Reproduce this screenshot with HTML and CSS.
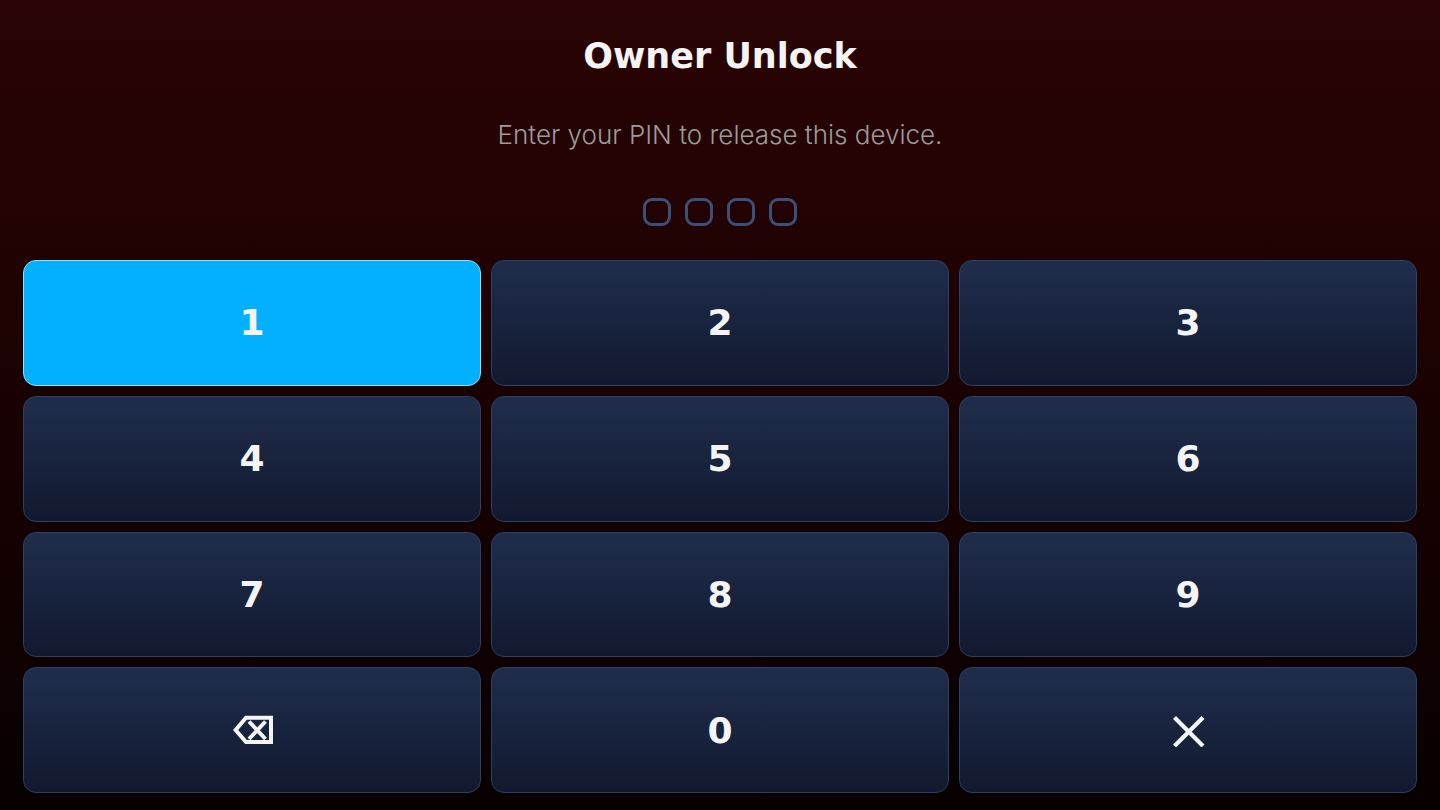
FILE: index.html
```html
<!DOCTYPE html>
<html lang="en">
<head>
    <meta charset="UTF-8">
    <meta name="viewport" content="width=device-width, initial-scale=1.0">
    <title>Owner Unlock</title>
    <link rel="stylesheet" href="styles.css">
</head>
<body>
    <main class="unlock">
        <h1 class="title">Owner Unlock</h1>
        <p class="hint">Enter your PIN to release this device.</p>

        <!-- one box for each digit of the PIN -->
        <div class="pin" role="img" aria-label="PIN digits">
            <span class="pin-box"></span>
            <span class="pin-box"></span>
            <span class="pin-box"></span>
            <span class="pin-box"></span>
        </div>

        <div class="keypad">
            <button type="button" class="key active">1</button>
            <button type="button" class="key">2</button>
            <button type="button" class="key">3</button>
            <button type="button" class="key">4</button>
            <button type="button" class="key">5</button>
            <button type="button" class="key">6</button>
            <button type="button" class="key">7</button>
            <button type="button" class="key">8</button>
            <button type="button" class="key">9</button>
            <button type="button" class="key" aria-label="Delete">
                <svg class="icon" width="42" height="32" viewBox="0 0 42 32">
                    <path d="M4.6 16 L15 3.8 H40 V28 H15 Z" stroke-width="4"/>
                    <path d="M18 7.5 L34.5 25 M34.5 7.5 L18 25" stroke-width="4"/>
                </svg>
            </button>
            <button type="button" class="key">0</button>
            <button type="button" class="key" aria-label="Cancel">
                <svg class="icon" width="34" height="34" viewBox="0 0 34 34">
                    <path d="M3.5 4.5 L32 33 M32 4.5 L3.5 33" stroke-width="4.2"/>
                </svg>
            </button>
        </div>
    </main>
</body>
</html>
```
FILE: styles.css
```css
*{
    box-sizing: border-box;
}
body{
    margin: 0;
    background: linear-gradient(#2a0404, #200202 33%, #080000);
    color: #f4f4f4;
    font-family: Inter, sans-serif;
}
.unlock{
    display: flex;
    flex-direction: column;
    align-items: center;
    min-height: 100vh;
    padding: 32px 23px 17px;
}
.title{
    margin: 0;
    font-family: "DejaVu Sans", sans-serif;
    font-size: 35px;
    font-weight: bold;
    line-height: 48px;
}
.hint{
    margin: 36px 0 44px;
    color: #9c9c9c;
    font-size: 26px;
    font-weight: 350;
    line-height: 38px;
}
.pin{
    display: flex;
    gap: 14px;
    margin-bottom: 34px;
}
.pin-box{
    width: 28px;
    height: 28px;
    border: 3px solid #3b4f77;
    border-radius: 9px;
}
.keypad{
    flex: 1;
    display: grid;
    grid-template-columns: repeat(3, 1fr);
    grid-auto-rows: 1fr;
    gap: 10px;
    width: 100%;
}
.key{
    display: flex;
    align-items: center;
    justify-content: center;
    padding: 0;
    border: 1px solid #2e4064;
    border-radius: 13px;
    background: linear-gradient(#1f2d4c, #11192f);
    background-origin: border-box;
    color: #f4f4f4;
    font-family: "DejaVu Sans", sans-serif;
    font-size: 36px;
    font-weight: bold;
    cursor: pointer;
}
.key.active{
    border-color: #8ce4ff;
    background: #02b0ff;
}
.icon{
    fill: none;
    stroke: #f4f4f4;
}
```
